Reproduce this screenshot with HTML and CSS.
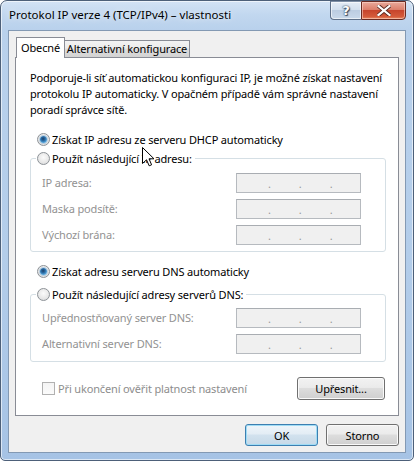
FILE: index.html
```html
<!DOCTYPE html>
<html lang="cs">
<head>
<meta charset="utf-8">
<title>Protokol IP verze 4 (TCP/IPv4) – vlastnosti</title>
<link rel="stylesheet" href="styles.css">
</head>
<body>
<div class="window">
  <div class="titlebar">
    <span class="title">Protokol IP verze 4 (TCP/IPv4) – vlastnosti</span>
    <div class="caption">
      <div class="cap-btn help">?</div>
      <div class="cap-btn close">
        <svg width="14" height="11" viewBox="0 0 14 11"><path d="M1.5 1 L12.5 10 M12.5 1 L1.5 10" stroke="#5b2a22" stroke-width="4" stroke-linecap="square"/><path d="M1.5 1 L12.5 10 M12.5 1 L1.5 10" stroke="#ffffff" stroke-width="2.2" stroke-linecap="square"/></svg>
      </div>
    </div>
  </div>
  <div class="client">
    <div class="tabs">
      <div class="tab active">Obecné</div>
      <div class="tab">Alternativní konfigurace</div>
    </div>
    <div class="panel">
      <p class="intro">Podporuje-li síť automatickou konfiguraci IP, je možné získat nastavení<br>protokolu IP automaticky. V opačném případě vám správné nastavení<br>poradí správce sítě.</p>
      <div class="option opt-dhcp"><span class="radio on"></span><span>Získat IP adresu ze serveru DHCP automaticky</span></div>
      <fieldset class="group group-ip">
        <legend class="option"><span class="radio"></span><span>Použít následující IP adresu:</span></legend>
        <div class="fields">
          <span class="label">IP adresa:</span><span class="ip"><i>.</i><i>.</i><i>.</i></span>
          <span class="label">Maska podsítě:</span><span class="ip"><i>.</i><i>.</i><i>.</i></span>
          <span class="label">Výchozí brána:</span><span class="ip"><i>.</i><i>.</i><i>.</i></span>
        </div>
      </fieldset>
      <div class="option opt-dns"><span class="radio on"></span><span>Získat adresu serveru DNS automaticky</span></div>
      <fieldset class="group group-dns">
        <legend class="option"><span class="radio"></span><span>Použít následující adresy serverů DNS:</span></legend>
        <div class="fields">
          <span class="label">Upřednostňovaný server DNS:</span><span class="ip"><i>.</i><i>.</i><i>.</i></span>
          <span class="label">Alternativní server DNS:</span><span class="ip"><i>.</i><i>.</i><i>.</i></span>
        </div>
      </fieldset>
      <div class="bottom-row">
        <div class="check"><span class="box"></span><span>Při ukončení ověřit platnost nastavení</span></div>
        <button class="btn adv">Upřesnit...</button>
      </div>
    </div>
    <div class="actions">
      <button class="btn default">OK</button>
      <button class="btn">Storno</button>
    </div>
  </div>
  <svg class="cursor" width="13" height="20" viewBox="0 0 13 20"><path d="M0.5 0.5 L0.5 16.5 L4.5 12.8 L7.2 18.8 L9.6 17.8 L7 11.8 L12 11.8 Z" fill="#ffffff" stroke="#000000" stroke-width="1" stroke-linejoin="miter"/></svg>
</div>
</body>
</html>
```

FILE: styles.css
```css
* { box-sizing: border-box; }
html, body { margin: 0; padding: 0; }
body {
  width: 414px;
  height: 461px;
  overflow: hidden;
  background: #ffffff;
  font-family: "Noto Sans", "Open Sans", sans-serif;
  font-size: 11px;
  letter-spacing: -0.15px;
  color: #000;
}
.window {
  position: relative;
  width: 414px;
  height: 461px;
  border: 1px solid #4d6079;
  border-radius: 7px 7px 5px 5px;
  background: linear-gradient(180deg, #d3e3f5 0px, #c1d7ef 14px, #b9d1ec 29px, #b3cdea 55%, #a6c3e5 100%);
  box-shadow: inset 0 0 0 1px rgba(255,255,255,0.6);
  padding: 0 7px 7px 7px;
  display: flex;
  flex-direction: column;
}
.titlebar {
  height: 29px;
  display: flex;
  align-items: flex-start;
  flex: none;
}
.title {
  padding-left: 1px;
  line-height: 28px;
  font-size: 11.5px;
  letter-spacing: 0;
  color: #000;
  text-shadow: 0 0 6px rgba(255,255,255,0.9);
}
.caption {
  margin-left: auto;
  display: flex;
}
.cap-btn {
  height: 19px;
  border: 1px solid #5f7189;
  border-top-color: #7d8ea5;
  display: flex;
  align-items: center;
  justify-content: center;
}
.help {
  width: 31px;
  border-radius: 0 0 0 4px;
  border-right: none;
  background: linear-gradient(180deg, #e4ecf6 0%, #d3e0ee 45%, #bccde1 50%, #c9d9ea 100%);
  box-shadow: inset 0 0 0 1px rgba(255,255,255,0.6);
  color: #ffffff;
  font-family: "DejaVu Sans", sans-serif;
  font-weight: bold;
  font-size: 13px;
  text-shadow: 0 0 1px #3b4b60, 0 0 2px #3b4b60, 1px 1px 1px #3b4b60;
}
.close {
  width: 45px;
  border-radius: 0 0 4px 0;
  border-color: #6a2b22;
  background: linear-gradient(180deg, #e9a99b 0%, #dc7f6b 45%, #c7452c 50%, #d45a3a 85%, #e88a62 100%);
  box-shadow: inset 0 0 0 1px rgba(255,220,210,0.55);
}
.client {
  flex: 1;
  background: #f0f0f0;
  border: 1px solid #8399b3;
  padding: 6px 6px 0 6px;
  display: flex;
  flex-direction: column;
}
.tabs {
  display: flex;
  align-items: flex-end;
  height: 21px;
  padding-left: 1px;
  margin-bottom: -1px;
  position: relative;
  z-index: 1;
  flex: none;
}
.tab {
  height: 17px;
  width: 125px;
  margin-bottom: 1px;
  border: 1px solid #898c95;
  border-bottom: none;
  border-left: none;
  background: linear-gradient(180deg, #f3f3f3 0%, #ebebeb 45%, #dddddd 50%, #d3d3d3 100%);
  line-height: 16px;
  text-align: center;
  white-space: nowrap;
}
.tab.active {
  height: 21px;
  width: 49px;
  margin-bottom: 0;
  border-left: 1px solid #898c95;
  background: #ffffff;
  line-height: 19px;
}
.panel {
  flex: none;
  height: 359px;
  background: #ffffff;
  border: 1px solid #898c95;
  padding: 12px 12px 0 14px;
}
.intro {
  margin: 0;
  line-height: 16px;
  white-space: nowrap;
}
.option {
  display: flex;
  align-items: center;
  height: 16px;
  gap: 2px;
  white-space: nowrap;
}
.opt-dhcp { margin-top: 13px; padding-left: 7px; }
.opt-dns { margin-top: 11px; padding-left: 7px; }
.radio {
  width: 13px;
  height: 13px;
  flex: none;
  border-radius: 50%;
  border: 1px solid #8d9297;
  background: radial-gradient(circle at 50% 40%, #fbfbfb 0%, #e9e9e9 55%, #d2d4d6 100%);
  display: flex;
  align-items: center;
  justify-content: center;
}
.radio.on::after {
  content: "";
  width: 7px;
  height: 7px;
  border-radius: 50%;
  background: radial-gradient(circle at 45% 40%, #1c3f66 0%, #2a6aa3 35%, #5fb1e6 75%, #9fd6f5 100%);
  box-shadow: 0 0 0 1px rgba(90,150,200,0.35);
}
.group {
  margin: 3px 0 0 0;
  padding: 0;
  width: 356px;
  min-width: 0;
  border: 1px solid #d5dfe5;
  border-radius: 3px;
}
.group legend {
  margin-left: 5px;
  padding: 0 3px 0 1px;
}
.group-dns { margin-top: 7px; }
.fields {
  display: grid;
  grid-template-columns: 194px 125px;
  row-gap: 6px;
  align-items: center;
  padding: 7px 0 6px 11px;
}
.group-dns .fields { padding: 6px 0 7px 11px; }
.label {
  color: #929292;
  line-height: 20px;
  white-space: nowrap;
}
.ip {
  height: 20px;
  border: 1px solid #b6babf;
  border-top-color: #a9adb2;
  background: #f0f0f0;
  display: flex;
  align-items: center;
  padding-left: 31px;
}
.ip i {
  font-style: normal;
  width: 3px;
  margin-right: 28px;
  color: #9a9a9a;
  line-height: 18px;
  padding-top: 2px;
}
.bottom-row {
  display: flex;
  align-items: center;
  margin-top: 15px;
  height: 23px;
}
.check {
  display: flex;
  align-items: center;
  gap: 3px;
  padding-left: 12px;
  color: #8d8d8d;
  white-space: nowrap;
}
.box {
  width: 13px;
  height: 13px;
  border: 1px solid #b1b1b1;
  background: linear-gradient(180deg, #f4f4f4, #fbfbfb);
}
.btn {
  font-family: inherit;
  font-size: 11px;
  letter-spacing: inherit;
  color: #000;
  padding: 0;
  border: 1px solid #707070;
  border-radius: 3px;
  background: linear-gradient(180deg, #f2f2f2 0%, #ebebeb 45%, #dddddd 50%, #cfcfcf 100%);
  box-shadow: inset 0 0 0 1px #fafafa;
}
.adv {
  margin-left: auto;
  margin-right: 1px;
  width: 88px;
  height: 23px;
}
.actions {
  display: flex;
  justify-content: flex-end;
  gap: 8px;
  margin-top: 8px;
}
.actions .btn {
  width: 73px;
  height: 22px;
}
.btn.default {
  border-color: #3c7fb1;
  background: linear-gradient(180deg, #eef5fa 0%, #e3edf5 45%, #d2e2ee 50%, #c6d9e8 100%);
  box-shadow: inset 0 0 0 1px #9fdcf5;
}
.cursor {
  position: absolute;
  left: 141px;
  top: 146px;
}
```
